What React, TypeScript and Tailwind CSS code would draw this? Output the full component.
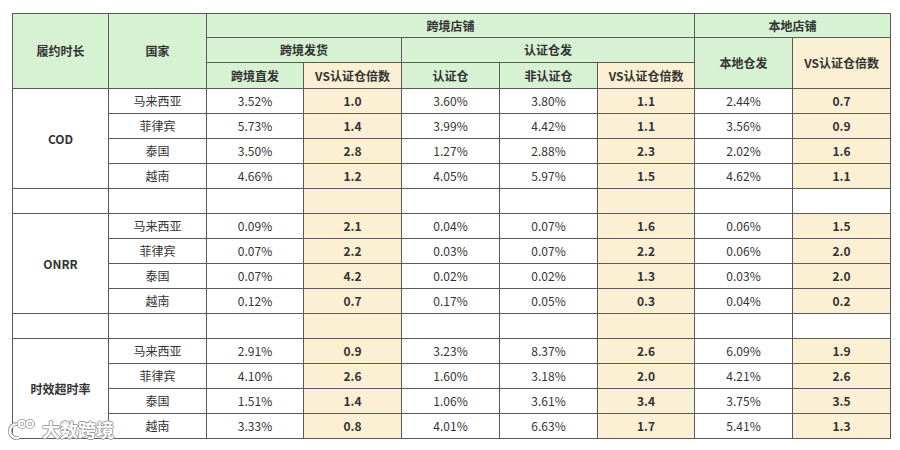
import React from 'react';

type Row = { country: string; direct: string; vs1: string; cert: string; nonCert: string; vs2: string; local: string; vs3: string };

const groups: { name: string; rows: Row[] }[] = [
  {
    name: 'COD',
    rows: [
      { country: '马来西亚', direct: '3.52%', vs1: '1.0', cert: '3.60%', nonCert: '3.80%', vs2: '1.1', local: '2.44%', vs3: '0.7' },
      { country: '菲律宾', direct: '5.73%', vs1: '1.4', cert: '3.99%', nonCert: '4.42%', vs2: '1.1', local: '3.56%', vs3: '0.9' },
      { country: '泰国', direct: '3.50%', vs1: '2.8', cert: '1.27%', nonCert: '2.88%', vs2: '2.3', local: '2.02%', vs3: '1.6' },
      { country: '越南', direct: '4.66%', vs1: '1.2', cert: '4.05%', nonCert: '5.97%', vs2: '1.5', local: '4.62%', vs3: '1.1' },
    ],
  },
  {
    name: 'ONRR',
    rows: [
      { country: '马来西亚', direct: '0.09%', vs1: '2.1', cert: '0.04%', nonCert: '0.07%', vs2: '1.6', local: '0.06%', vs3: '1.5' },
      { country: '菲律宾', direct: '0.07%', vs1: '2.2', cert: '0.03%', nonCert: '0.07%', vs2: '2.2', local: '0.06%', vs3: '2.0' },
      { country: '泰国', direct: '0.07%', vs1: '4.2', cert: '0.02%', nonCert: '0.02%', vs2: '1.3', local: '0.03%', vs3: '2.0' },
      { country: '越南', direct: '0.12%', vs1: '0.7', cert: '0.17%', nonCert: '0.05%', vs2: '0.3', local: '0.04%', vs3: '0.2' },
    ],
  },
  {
    name: '时效超时率',
    rows: [
      { country: '马来西亚', direct: '2.91%', vs1: '0.9', cert: '3.23%', nonCert: '8.37%', vs2: '2.6', local: '6.09%', vs3: '1.9' },
      { country: '菲律宾', direct: '4.10%', vs1: '2.6', cert: '1.60%', nonCert: '3.18%', vs2: '2.0', local: '4.21%', vs3: '2.6' },
      { country: '泰国', direct: '1.51%', vs1: '1.4', cert: '1.06%', nonCert: '3.61%', vs2: '3.4', local: '3.75%', vs3: '3.5' },
      { country: '越南', direct: '3.33%', vs1: '0.8', cert: '4.01%', nonCert: '6.63%', vs2: '1.7', local: '5.41%', vs3: '1.3' },
    ],
  },
];

const td = 'border border-[#5a5a5a] text-center p-0 h-[25px]';
const th = 'border border-[#5a5a5a] text-center p-0 font-bold bg-[#d7f1d3]';
const vs = 'bg-[#fbf0d3] font-bold';

export default function App() {
  return (
    <div
      className="relative w-[900px] h-[450px] bg-white pt-[13px] pl-[12px] text-[12px] text-[#333]"
      style={{ fontFamily: '"Noto Sans CJK SC", "Noto Sans", sans-serif' }}
    >
      <table className="border-collapse table-fixed w-[878px]">
        <colgroup>
          <col className="w-[96px]" />
          <col className="w-[98px]" />
          <col className="w-[97px]" />
          <col className="w-[98px]" />
          <col className="w-[98px]" />
          <col className="w-[98px]" />
          <col className="w-[97px]" />
          <col className="w-[98px]" />
          <col className="w-[98px]" />
        </colgroup>
        <thead>
          <tr className="h-[24px]">
            <th rowSpan={3} className={th}>履约时长</th>
            <th rowSpan={3} className={th}>国家</th>
            <th colSpan={5} className={th}>跨境店铺</th>
            <th colSpan={2} className={th}>本地店铺</th>
          </tr>
          <tr className="h-[25px]">
            <th colSpan={2} className={th}>跨境发货</th>
            <th colSpan={3} className={th}>认证仓发</th>
            <th rowSpan={2} className={th}>本地仓发</th>
            <th rowSpan={2} className={`${th} !bg-[#fbf0d3]`}>VS认证仓倍数</th>
          </tr>
          <tr className="h-[26px]">
            <th className={th}>跨境直发</th>
            <th className={`${th} !bg-[#fbf0d3]`}>VS认证仓倍数</th>
            <th className={th}>认证仓</th>
            <th className={th}>非认证仓</th>
            <th className={`${th} !bg-[#fbf0d3]`}>VS认证仓倍数</th>
          </tr>
        </thead>
        <tbody>
          {groups.map((g, gi) => (
            <React.Fragment key={g.name}>
              {gi > 0 && (
                <tr>
                  <td className={td} />
                  <td className={td} />
                  <td className={td} />
                  <td className={`${td} ${vs}`} />
                  <td className={td} />
                  <td className={td} />
                  <td className={`${td} ${vs}`} />
                  <td className={td} />
                  <td className={td} />
                </tr>
              )}
              {g.rows.map((r, i) => (
                <tr key={r.country}>
                  {i === 0 && (
                    <td rowSpan={4} className={`${td} font-bold`}>
                      {g.name}
                    </td>
                  )}
                  <td className={td}>{r.country}</td>
                  <td className={td}>{r.direct}</td>
                  <td className={`${td} ${vs}`}>{r.vs1}</td>
                  <td className={td}>{r.cert}</td>
                  <td className={td}>{r.nonCert}</td>
                  <td className={`${td} ${vs}`}>{r.vs2}</td>
                  <td className={td}>{r.local}</td>
                  <td className={`${td} ${vs}`}>{r.vs3}</td>
                </tr>
              ))}
            </React.Fragment>
          ))}
        </tbody>
      </table>

      {/* watermark */}
      <div className="absolute left-[8px] top-[418px] flex items-center gap-[6px] text-white text-[18px] font-bold leading-none [text-shadow:1px_0_0_#9a9a9a,-1px_0_0_#9a9a9a,0_1px_0_#9a9a9a,0_-1px_0_#9a9a9a]">
        <svg width="28" height="22" viewBox="0 0 28 22" fill="none" strokeWidth="2.2">
          <path d="M9 6 C4 6 2 10 2 13 C2 18 6 21 11 20" stroke="#9a9a9a" strokeWidth="4" />
          <path d="M9 6 C4 6 2 10 2 13 C2 18 6 21 11 20" stroke="white" />
          <circle cx="14" cy="6" r="3.2" stroke="#9a9a9a" strokeWidth="3.8" />
          <circle cx="14" cy="6" r="3.2" stroke="white" />
          <circle cx="22" cy="6" r="3.2" stroke="#9a9a9a" strokeWidth="3.8" />
          <circle cx="22" cy="6" r="3.2" stroke="white" />
        </svg>
        <span>大数跨境</span>
      </div>
    </div>
  );
}
